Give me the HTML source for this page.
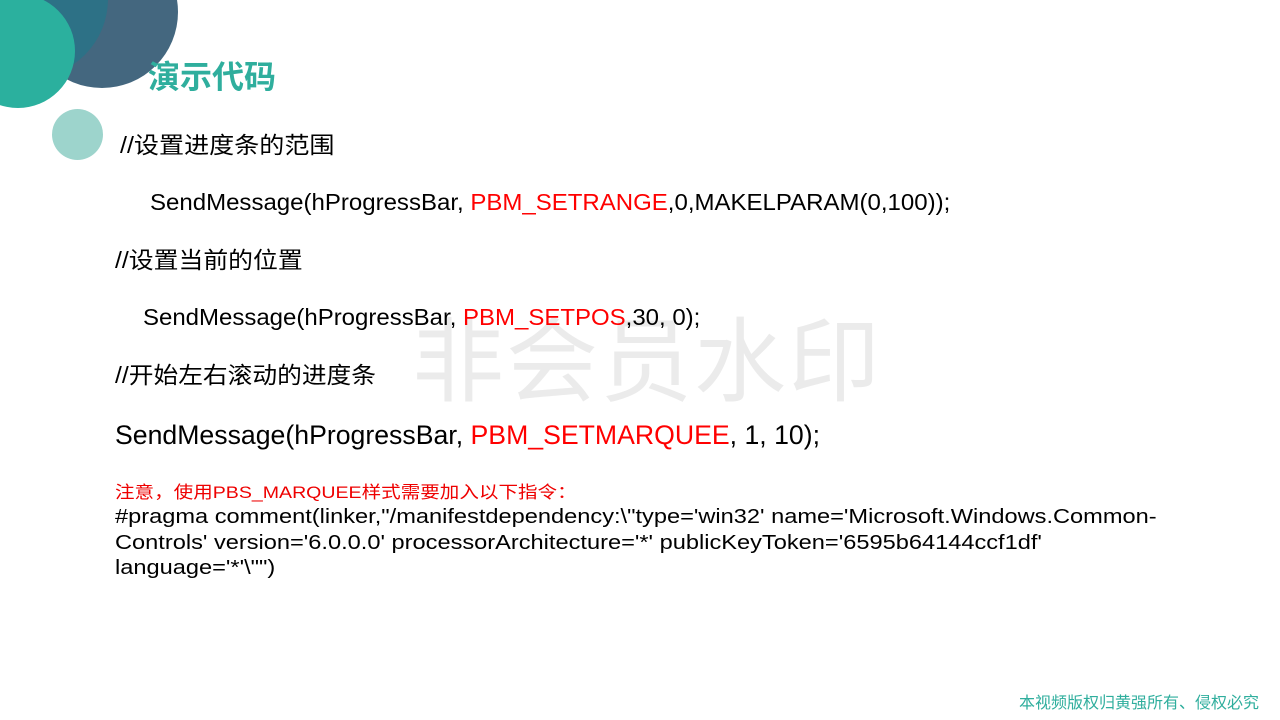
<!DOCTYPE html>
<html><head><meta charset="utf-8"><style>
body{margin:0;width:1280px;height:720px;position:relative;overflow:hidden;background:#fff;font-family:"Liberation Sans","Noto Sans CJK SC",sans-serif;}
.c{position:absolute;border-radius:50%;}
.t{position:absolute;white-space:nowrap;color:#000;font-size:23px;line-height:30px;transform-origin:0 50%;}
.r{color:#f00}
</style></head><body>
<div class="c" style="left:26px;top:-64px;width:152px;height:152px;background:#44677f"></div>
<div class="c" style="left:-50px;top:-80px;width:158px;height:158px;background:#2d7186"></div>
<div class="c" style="left:-39px;top:-6px;width:114px;height:114px;background:#2bb09e"></div>
<div class="c" style="left:52px;top:109px;width:51px;height:51px;background:#9dd4cc"></div>
<div class="t" style="left:148px;top:58px;font-size:32px;line-height:38px;font-weight:bold;color:#2fae9d">演示代码</div>
<div class="t" style="left:412px;top:308px;font-size:92px;line-height:110px;color:#ebebeb;letter-spacing:2px">非会员水印</div>
<div class="t" style="left:120px;top:130px;transform:scaleX(1.09)">//设置进度条的范围</div>
<div class="t" style="left:150px;top:187px;transform:scaleX(1.044)">SendMessage(hProgressBar, <span class="r">PBM_SETRANGE</span>,0,MAKELPARAM(0,100));</div>
<div class="t" style="left:115px;top:245px;transform:scaleX(1.08)">//设置当前的位置</div>
<div class="t" style="left:143px;top:302px;transform:scaleX(1.043)">SendMessage(hProgressBar, <span class="r">PBM_SETPOS</span>,30, 0);</div>
<div class="t" style="left:115px;top:360px;transform:scaleX(1.075)">//开始左右滚动的进度条</div>
<div class="t" style="left:115px;top:418px;font-size:27px;line-height:34px;transform:scaleX(0.987)">SendMessage(hProgressBar, <span class="r">PBM_SETMARQUEE</span>, 1, 10);</div>
<div class="t" style="left:115px;top:482px;font-size:17px;line-height:22px;color:#e00;transform:scaleX(1.15)">注意，使用PBS_MARQUEE样式需要加入以下指令：</div>
<div class="t" style="left:115px;top:505px;font-size:20px;line-height:25.5px;transform:scaleX(1.18);transform-origin:0 0">#pragma comment(linker,"/manifestdependency:\"type='win32' name='Microsoft.Windows.Common-<br>Controls' version='6.0.0.0' processorArchitecture='*' publicKeyToken='6595b64144ccf1df'<br>language='*'\"")</div>
<div class="t" style="left:1019px;top:694px;font-size:16px;line-height:20px;color:#2fae9d">本视频版权归黄强所有、侵权必究</div>
</body></html>
